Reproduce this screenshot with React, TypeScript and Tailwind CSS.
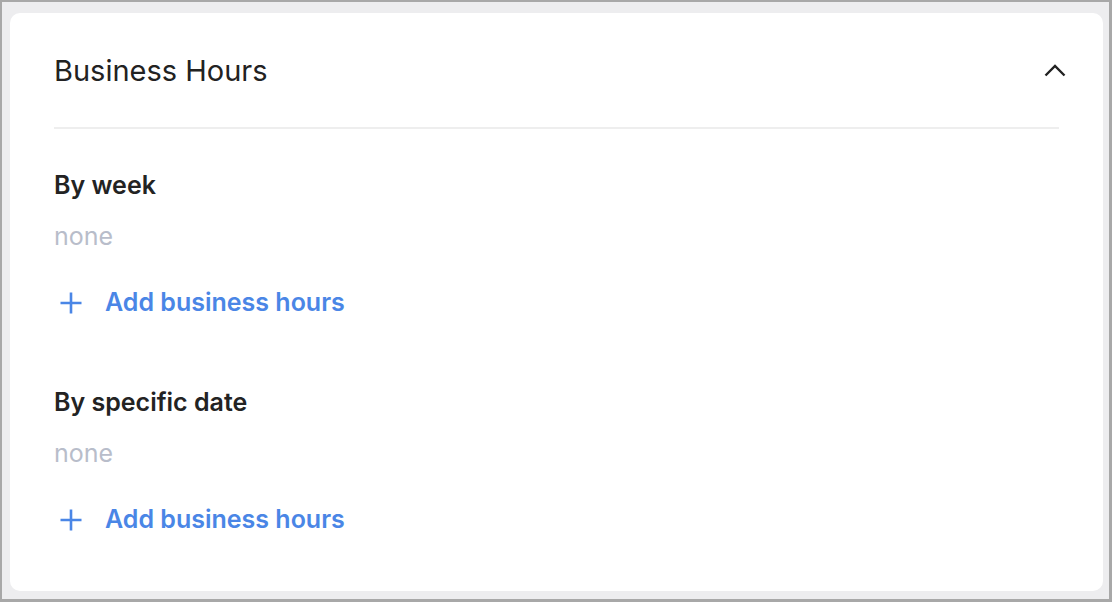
import React from "react";

function PlusIcon() {
  return (
    <svg width="22" height="22" viewBox="0 0 22 22" fill="none" className="shrink-0">
      <path d="M11 0.5v21M0.5 11h21" stroke="#4a86e6" strokeWidth="2.6" />
    </svg>
  );
}

function ChevronUp() {
  return (
    <svg width="22" height="13" viewBox="0 0 22 13" fill="none" className="-mr-[7px]">
      <path d="M1.5 11.5 11 2l9.5 9.5" stroke="#222222" strokeWidth="2.4" />
    </svg>
  );
}

function Section({ title, last }: { title: string; last?: boolean }) {
  return (
    <div className={last ? "" : "mb-[75px]"}>
      <p className="text-[25px] leading-[25px] font-semibold text-[#232323]">{title}</p>
      <p className="mt-[26px] text-[25px] leading-[25px] text-[#b8bdca]">none</p>
      <button className="mt-[41px] flex items-center gap-[23px] pl-[6px] text-[25px] leading-[25px] font-semibold text-[#4a86e6]">
        <PlusIcon />
        <span>Add business hours</span>
      </button>
    </div>
  );
}

export default function App() {
  return (
    <div
      className="w-[1112px] h-[602px] bg-[#ededef] border-[#a8a8a8] border-l-2 border-t-2 border-r-[3px] border-b-[3px] pl-[8px] pt-[11px] pr-[6px] pb-[8px] flex"
      style={{ fontFamily: 'Inter, "Liberation Sans", Arial, sans-serif' }}
    >
      <div className="flex-1 bg-white rounded-[10px] px-[44px]">
        <div className="h-[114px] flex items-center justify-between">
          <h2 className="text-[29px] leading-[30px] text-[#222222] pt-[2px]">Business Hours</h2>
          <ChevronUp />
        </div>
        <div className="h-[2px] bg-[#eeeeee]" />
        <div className="pt-[44px]">
          <Section title="By week" />
          <Section title="By specific date" last />
        </div>
      </div>
    </div>
  );
}
